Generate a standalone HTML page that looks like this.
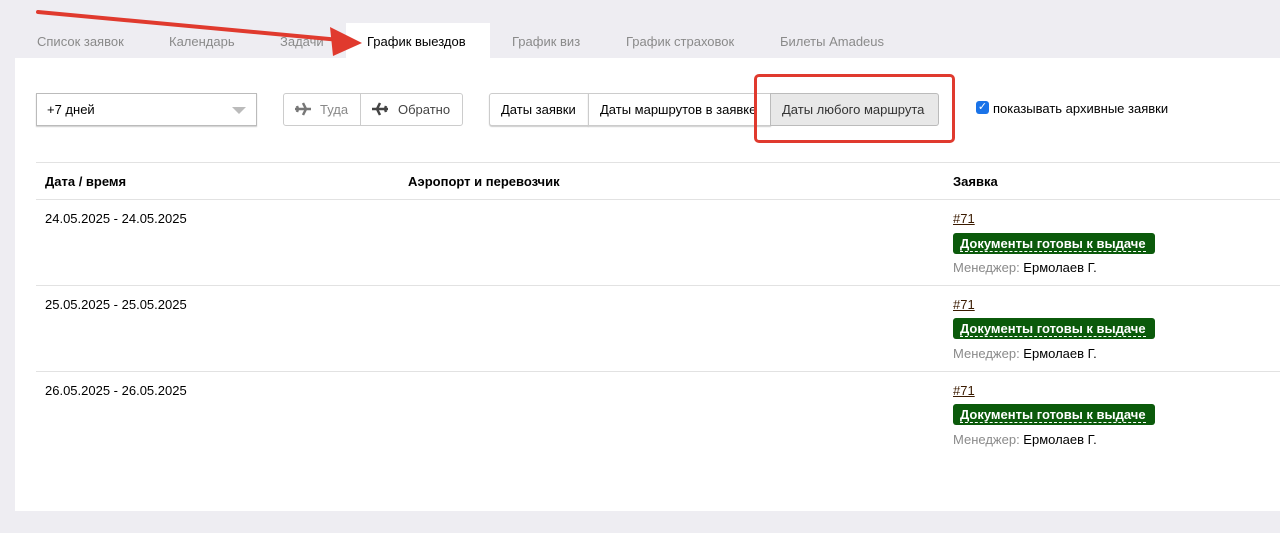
<!DOCTYPE html>
<html><head><meta charset="utf-8"><style>
*{margin:0;padding:0;box-sizing:border-box}
body{width:1280px;height:533px;background:#eeedf2;font-family:"Liberation Sans",sans-serif;font-size:13px;color:#000;position:relative;overflow:hidden}
.a{position:absolute;white-space:nowrap}
.tab{top:34px;color:#8a8a8a;font-size:13px}
.panel{position:absolute;left:15px;top:58px;width:1265px;height:453px;background:#fff}
.btn{position:absolute;top:93px;height:33px;border:1px solid #ccc;background:#fff;line-height:31px;font-size:13px}
.line{position:absolute;left:36px;right:0;height:1px;background:#e2e2e2}
.badge{background:#0b5a0b;color:#fff;font-weight:bold;font-size:13px;padding:2px 9px 2px 7px;border-radius:3px;height:21px;line-height:17px}
.badge span{border-bottom:1px dashed #fff}
.gr{color:#8a8a8a}
</style></head><body>
<div class="a" style="left:346px;top:23px;width:144px;height:36px;background:#fff"></div>
<div class="panel"></div>
<div class="a tab" style="left:37px">Список заявок</div>
<div class="a tab" style="left:169px">Календарь</div>
<div class="a tab" style="left:280px">Задачи</div>
<div class="a tab" style="left:367px;color:#000">График выездов</div>
<div class="a tab" style="left:512px">График виз</div>
<div class="a tab" style="left:626px">График страховок</div>
<div class="a tab" style="left:780px">Билеты Amadeus</div>
<svg class="a" style="left:0;top:0" width="400" height="60"><line x1="38" y1="12" x2="340" y2="40" stroke="#e03a2e" stroke-width="4" stroke-linecap="round"/><polygon points="362,43 330,27 333,56" fill="#e03a2e"/></svg>

<div class="btn" style="left:36px;width:221px;padding-left:10px;border-color:#bbb;box-shadow:0 1px 1px #ccc">+7 дней</div>
<svg class="a" style="left:232px;top:107px" width="14" height="8"><polygon points="0,0 14,0 7,7" fill="#bbb"/></svg>
<div class="btn" style="left:283px;width:78px;padding-left:36px;color:#888;border-radius:3px 0 0 3px">Туда</div>
<div class="btn" style="left:360px;width:103px;padding-left:37px;color:#444;border-radius:0 3px 3px 0">Обратно</div>
<svg class="a" style="left:294px;top:102px" width="18" height="14" viewBox="0 0 18 14"><path d="M1 7 L17 7 M9 1 L12 7 L9 13 M3 4 L4 7 L3 10" stroke="#777" stroke-width="2.5" fill="none"/></svg>
<svg class="a" style="left:371px;top:102px" width="18" height="14" viewBox="0 0 18 14"><path d="M1 7 L17 7 M9 1 L6 7 L9 13 M15 4 L14 7 L15 10" stroke="#444" stroke-width="2.5" fill="none"/></svg>

<div class="btn" style="left:489px;width:100px;padding-left:11px;border-radius:3px 0 0 3px;box-shadow:0 1px 1px #ccc">Даты заявки</div>
<div class="btn" style="left:588px;width:183px;padding-left:11px;box-shadow:0 1px 1px #ccc;overflow:hidden">Даты маршрутов в заявке</div>
<div class="btn" style="left:770px;width:169px;padding-left:11px;background:#e8e8e8;border-color:#bbb;border-radius:0 3px 3px 0;color:#333">Даты любого маршрута</div>
<div class="a" style="left:754px;top:74px;width:201px;height:69px;border:3px solid #e03a2e;border-radius:5px"></div>
<div class="a" style="left:976px;top:101px;width:13px;height:13px;background:#1a73e8;border-radius:3px;color:#fff;font-size:11px;line-height:13px;text-align:center">✓</div>
<div class="a" style="left:993px;top:101px">показывать архивные заявки</div>

<div class="line" style="top:162px"></div>
<div class="a" style="left:45px;top:174px;font-weight:bold">Дата / время</div>
<div class="a" style="left:408px;top:174px;font-weight:bold">Аэропорт и перевозчик</div>
<div class="a" style="left:953px;top:174px;font-weight:bold">Заявка</div>
<div class="line" style="top:199px"></div>

<div class="a" style="left:45px;top:211px">24.05.2025 - 24.05.2025</div>
<div class="a" style="left:953px;top:211px;text-decoration:underline;color:#3a1a00">#71</div>
<div class="a badge" style="left:953px;top:233px"><span>Документы готовы к выдаче</span></div>
<div class="a" style="left:953px;top:260px"><span class="gr">Менеджер:</span> Ермолаев Г.</div>
<div class="line" style="top:285px"></div>

<div class="a" style="left:45px;top:297px">25.05.2025 - 25.05.2025</div>
<div class="a" style="left:953px;top:297px;text-decoration:underline;color:#3a1a00">#71</div>
<div class="a badge" style="left:953px;top:318px"><span>Документы готовы к выдаче</span></div>
<div class="a" style="left:953px;top:346px"><span class="gr">Менеджер:</span> Ермолаев Г.</div>
<div class="line" style="top:371px"></div>

<div class="a" style="left:45px;top:383px">26.05.2025 - 26.05.2025</div>
<div class="a" style="left:953px;top:383px;text-decoration:underline;color:#3a1a00">#71</div>
<div class="a badge" style="left:953px;top:404px"><span>Документы готовы к выдаче</span></div>
<div class="a" style="left:953px;top:432px"><span class="gr">Менеджер:</span> Ермолаев Г.</div>
</body></html>
